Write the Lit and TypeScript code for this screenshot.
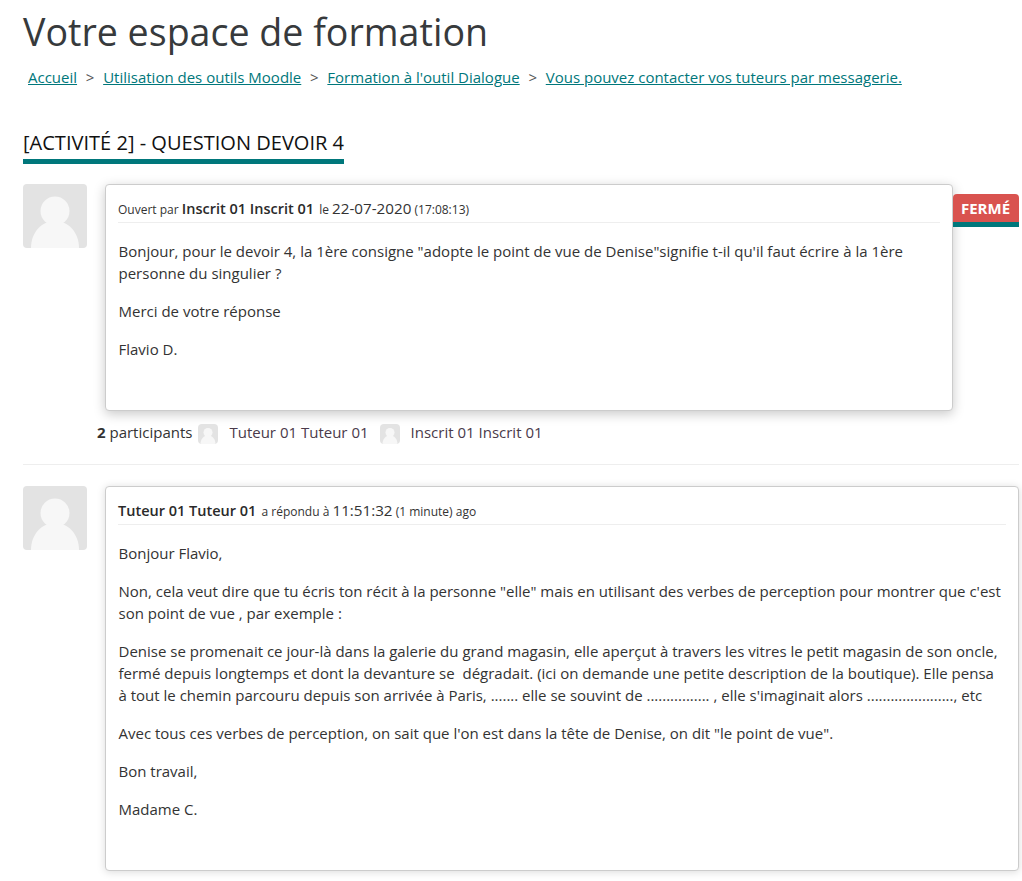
import { LitElement, html, css, svg } from "lit";
import { customElement } from "lit/decorators.js";

const person = svg`<rect width="64" height="64" fill="#e3e3e3"/><circle cx="32" cy="27" r="14.5" fill="#f7f7f7"/><path d="M8 64C8 48 19 37 32 37s24 11 24 27z" fill="#f7f7f7"/>`;
const avatar = (cls: string) => html`<svg class=${cls} viewBox="0 0 64 64">${person}</svg>`;

@customElement("app-root")
export class AppRoot extends LitElement {
  static styles = css`
    :host { display: block; width: 1022px; height: 881px; overflow: hidden; background: #fff; font-family: "Open Sans", sans-serif; font-size: 15px; line-height: 22px; color: #333; box-sizing: border-box; }
    .page { padding: 0 3px 0 23px; }
    h1 { margin: 0; padding-top: 10px; font-size: 37.6px; line-height: 44px; font-weight: 400; color: #373a3c; }
    .crumbs { display: flex; margin: 12px 0 0 5px; height: 22px; color: #555; }
    .crumbs a { color: #00777b; text-decoration: underline; }
    .crumbs span { margin: 0 8.75px; }
    h2 { display: inline-block; margin: 42px 0 0; padding-bottom: 3px; border-bottom: 5px solid #00777b; font-size: 20.06px; line-height: 26px; font-weight: 400; color: #111; }
    .row { display: flex; align-items: flex-start; }
    .big { width: 64px; height: 64px; flex: none; margin-right: 18px; border-radius: 4px; }
    .first { margin-top: 20px; }
    .card { box-sizing: border-box; border: 1px solid #ccc; border-radius: 4px; padding: 12px; background: #fff; }
    .c1 { width: 848px; height: 227px; box-shadow: 0 3px 12px rgba(0,0,0,.22); }
    .c2 { width: 914px; height: 385px; box-shadow: 0 1px 8px rgba(0,0,0,.15); }
    .head { height: 25px; margin-bottom: 17px; border-bottom: 1px solid #eee; display: block; font-size: 12px; line-height: 22px; white-space: nowrap; }
    .head b { font-size: 14.5px; font-weight: 600; color: #2a2a2a; margin-right: 2px; }
    .head .d { font-size: 15.2px; }
    p { margin: 0 1px 16px 0.5px; white-space: pre-wrap; }
    .badge-wrap { flex: none; width: 66px; margin-top: 10px; border-bottom: 5px solid #00777b; }
    .badge { box-sizing: border-box; padding-right: 1px; background: #d9534f; color: #fff; font-weight: 700; font-size: 15px; line-height: 28px; height: 28px; text-align: center; border-radius: 4px 4px 0 0; }
    .parts { display: flex; align-items: flex-start; margin: 10px 0 0 74px; height: 22px; white-space: pre; }
    .parts b { font-weight: 700; }
    .small { width: 20px; height: 20px; margin: 3px 11px 0 6px; border-radius: 4px; }
    .name { margin-right: 5px; color: #4a3a4a; }
    hr { border: 0; border-top: 1px solid #eee; margin: 21px 0 21px; }
  `;
  render() {
    return html`<div class="page">
      <h1>Votre espace de formation</h1>
      <nav class="crumbs"><a>Accueil</a><span>&gt;</span><a>Utilisation des outils Moodle</a><span>&gt;</span><a>Formation à l'outil Dialogue</a><span>&gt;</span><a>Vous pouvez contacter vos tuteurs par messagerie.</a></nav>
      <h2>[ACTIVITÉ 2] - QUESTION DEVOIR 4</h2>
      <div class="row first">
        ${avatar("big")}
        <div class="card c1">
          <div class="head">Ouvert par <b>Inscrit 01 Inscrit 01</b> le <span class="d">22-07-2020</span> (17:08:13)</div>
          <p>Bonjour, pour le devoir 4, la 1ère consigne "adopte le point de vue de Denise"signifie t-il qu'il faut écrire à la 1ère personne du singulier ?</p>
          <p>Merci de votre réponse</p>
          <p>Flavio D.</p>
        </div>
        <div class="badge-wrap"><div class="badge">FERMÉ</div></div>
      </div>
      <div class="parts"><b>2</b><span> participants</span>${avatar("small")}<span class="name">Tuteur 01 Tuteur 01</span>${avatar("small")}<span class="name">Inscrit 01 Inscrit 01</span></div>
      <hr />
      <div class="row">
        ${avatar("big")}
        <div class="card c2">
          <div class="head"><b>Tuteur 01 Tuteur 01</b> a répondu à <span class="d">11:51:32</span> (1 minute) ago</div>
          <p>Bonjour Flavio,</p>
          <p>Non, cela veut dire que tu écris ton récit à la personne "elle" mais en utilisant des verbes de perception pour montrer que c'est son point de vue , par exemple :</p>
          <p>Denise se promenait ce jour-là dans la galerie du grand magasin, elle aperçut à travers les vitres le petit magasin de son oncle, fermé depuis longtemps et dont la devanture se  dégradait. (ici on demande une petite description de la boutique). Elle pensa à tout le chemin parcouru depuis son arrivée à Paris, ....... elle se souvint de ................ , elle s'imaginait alors ......................, etc</p>
          <p>Avec tous ces verbes de perception, on sait que l'on est dans la tête de Denise, on dit "le point de vue".</p>
          <p>Bon travail,</p>
          <p>Madame C.</p>
        </div>
      </div>
    </div>`;
  }
}
